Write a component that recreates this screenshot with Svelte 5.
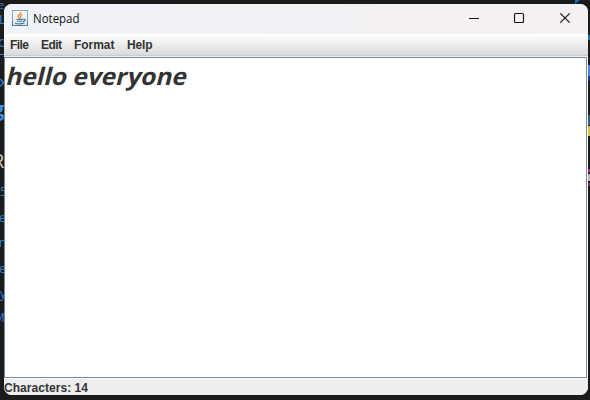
<script>
  const menus = [
    { label: 'File', width: 19 },
    { label: 'Edit', width: 21 },
    { label: 'Format', width: 40.5 },
    { label: 'Help', width: 25.5 }
  ];
  const text = 'hello everyone';
  const count = 14;

  // Pieces of the editor behind the window that stick out past its edges.
  const fragments = [
    { t: 'e', x: -2, y: -2, s: 11, c: '#2f7fd0' },
    { t: 'L', x: -1, y: 12, s: 13, c: '#2d83e0' },
    { t: 'c', x: -2, y: 34, s: 14, c: '#2d83e0' },
    { t: '›', x: -1, y: 69, s: 20, c: '#2d83e0' },
    { t: 'g', x: -7, y: 97, s: 20, c: '#3b8eea', b: true },
    { t: 'R', x: -8, y: 149, s: 20, c: '#cfc6bd' },
    { t: '5', x: 0, y: 185, s: 12, c: '#2a7bb8' },
    { t: 'e', x: -1, y: 211, s: 12, c: '#2f80d0' },
    { t: 'n', x: -1, y: 236, s: 12, c: '#2f80d0' },
    { t: 'e', x: -1, y: 262, s: 12, c: '#2f80d0' },
    { t: 'y', x: 0, y: 287, s: 12, c: '#2f80d0' },
    { t: 'M', x: -6, y: 311, s: 12, c: '#3a7ce4' }
  ];
  const marks = [
    { y: 35, h: 5, c: '#0d78c4' },
    { y: 65, h: 11, c: '#3c8ee4' },
    { y: 76, h: 5, c: '#123c7c' },
    { y: 115, h: 10, c: '#2c5f80' },
    { y: 126, h: 10, c: '#e3c04d' },
    { y: 169, h: 3, c: '#8b3598' },
    { y: 174, h: 7, c: '#b9b5b5' },
    { y: 183, h: 3, c: '#7b2f88' }
  ];
</script>

<div class="desktop">
  {#each fragments as f}
    <span class="frag" class:bold={f.b} style="left:{f.x}px;top:{f.y}px;font-size:{f.s}px;color:{f.c}">{f.t}</span>
  {/each}
  <i class="rule"></i>
  <i class="corner"></i>
  {#each marks as m}
    <i class="mark" style="top:{m.y}px;height:{m.h}px;background:{m.c}"></i>
  {/each}

  <main class="window">
    <header class="titlebar">
      <svg class="java" width="16" height="16" viewBox="0 0 16 16">
        <defs>
          <linearGradient id="tile" x1="0" y1="0" x2="0" y2="1">
            <stop offset="0" stop-color="#f7fafc" />
            <stop offset="1" stop-color="#dce6ee" />
          </linearGradient>
        </defs>
        <rect x=".5" y=".5" width="15" height="15" fill="url(#tile)" stroke="#8ba3b7" />
        <path d="M.5 11V15.500H15.500V11" fill="none" stroke="#557d9f" />
        <path d="M8.700 2C9.500 4 5.200 4.700 6.200 6.700L7.600 8.700M10.300 4.300C8 5.300 8 6.200 8.800 7.200L8.200 8.800" fill="none" stroke="#ef8a35" stroke-width="1.300" />
        <path d="M4.300 9.500H11M5 11.300H10.500M3 13.300Q8 14.500 12.500 13M11.200 9.300C14.300 8.700 13.300 11 11 11.500" fill="none" stroke="#49789f" stroke-width="1.100" />
      </svg>
      <svg class="title" width="60" height="18">
        <text x="0" y="13" textLength="46.5" lengthAdjust="spacingAndGlyphs">Notepad</text>
      </svg>
      <svg class="controls" width="104" height="14" viewBox="0 0 104 14" fill="none" stroke="#151515">
        <path d="M0 7.500H10" />
        <rect x="45.500" y="2.500" width="9" height="9" rx="1" stroke-width="1.150" />
        <path d="M91.300 2.300L100.700 11.700M100.700 2.300L91.300 11.700" stroke-width="1.200" />
      </svg>
    </header>

    <nav class="menubar">
      {#each menus as m}
        <svg width={m.width + 2} height="16">
          <text x="0" y="12" textLength={m.width}>{m.label}</text>
        </svg>
      {/each}
    </nav>

    <section class="pane">
      <div class="page">
        <svg width="200" height="36">
          <text class="doc" transform="translate(0 26.500) skewX(-14)" textLength="180.5" lengthAdjust="spacingAndGlyphs">{text}</text>
        </svg>
      </div>
    </section>

    <footer class="status">
      <svg width="100" height="16">
        <text x="0" y="13" textLength="84">Characters: {count}</text>
      </svg>
    </footer>
  </main>
</div>

<style>
  .desktop {
    position: relative;
    box-sizing: border-box;
    width: 590px;
    height: 400px;
    padding: 4px 2px 5px 4px;
    overflow: hidden;
    background: #1c1b1b;
    font-family: 'Liberation Sans', Arial, sans-serif;
  }
  .frag {
    position: absolute;
    line-height: 1.2;
    font-family: 'Open Sans', sans-serif;
  }
  .bold { font-weight: 700; }
  .rule {
    position: absolute;
    left: 0;
    top: 54px;
    width: 4px;
    height: 1px;
    background: #2d83e0;
  }
  .mark {
    position: absolute;
    left: 588px;
    width: 2px;
  }
  .corner {
    position: absolute;
    left: 575px;
    top: 0;
    border-top: 4px solid #0d70c0;
    border-right: 5px solid transparent;
  }
  .window {
    position: relative;
    display: flex;
    flex-direction: column;
    height: 391px;
    overflow: hidden;
    border-radius: 8px;
    background: #eeeeee;
  }
  .titlebar {
    display: flex;
    align-items: center;
    height: 30px;
    flex: none;
    padding: 0 15px 0 8px;
    background: linear-gradient(90deg, #f0f3f9, #f3f0f4 60%, #f4f0f3);
  }
  svg { display: block; flex: none; }
  text {
    font-size: 12px;
    font-weight: 700;
    fill: #333333;
  }
  .java { margin-top: -2px; }
  .title { margin: 0 auto 0 5px; }
  .title text {
    font: 12px 'Open Sans', sans-serif;
    fill: #111111;
  }
  .controls { margin-top: -2px; }
  .menubar {
    box-sizing: border-box;
    display: flex;
    gap: 10px;
    height: 22px;
    flex: none;
    padding: 3px 6px 0;
    background: linear-gradient(#ffffff, #dadada);
    border-bottom: 1px solid #cccccc;
  }
  .pane {
    box-sizing: border-box;
    flex: 1;
    padding: 0 1px 1px 0;
    background: #ffffff;
    border-top: 1px solid #eeeeee;
  }
  .page {
    box-sizing: border-box;
    height: 100%;
    border: 1px solid #7a8a99;
    background: #ffffff;
  }
  .doc {
    font: 700 24px 'Open Sans', sans-serif;
  }
  .status {
    height: 16px;
    flex: none;
    background: #eeeeee;
  }
</style>
